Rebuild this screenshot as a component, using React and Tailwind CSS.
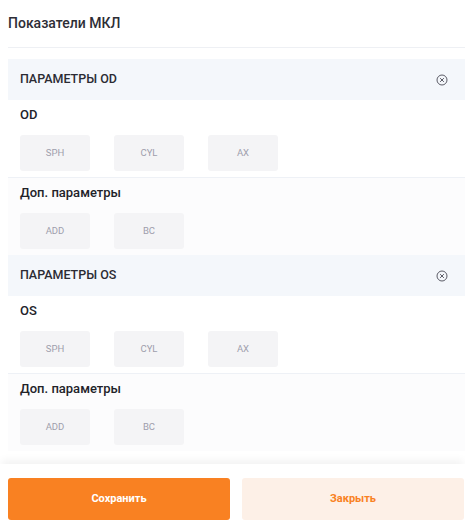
import React from "react";

// Small circled-x close icon used in section headers
const CloseCircle = () => (
    <svg width="12" height="12" viewBox="0 0 12 12" fill="none" className="shrink-0">
        <circle cx="6" cy="6" r="5" stroke="#4a4a55" strokeWidth="0.9" />
        <path d="M4.4 4.4 L7.6 7.6 M7.6 4.4 L4.4 7.6" stroke="#4a4a55" strokeWidth="0.9" strokeLinecap="round" />
    </svg>
);

const Field = ({ label }) => (
    <div className="w-[70px] h-9 rounded-[3px] bg-[#f4f4f6] flex items-center justify-center text-[9.5px] text-[#9e9eac]">
        {label}
    </div>
);

const EyeSection = ({ eye }) => (
    <div>
        {/* Section header */}
        <div className="h-[41px] bg-[#f4f7fb] flex items-center justify-between pl-3 pr-[17px]">
            <span className="text-[12.5px] font-medium text-[#2b2b33]">ПАРАМЕТРЫ {eye}</span>
            <CloseCircle />
        </div>

        {/* Main params */}
        <div className="px-3 pt-[7px] pb-[6px] border-b border-[#eef1f6]">
            <p className="text-[13px] leading-4 font-medium text-[#222229]">{eye}</p>
            <div className="flex gap-6 mt-3">
                <Field label="SPH" />
                <Field label="CYL" />
                <Field label="AX" />
            </div>
        </div>

        {/* Extra params */}
        <div className="px-3 pt-[7px] pb-[6px] bg-[#fcfcfd]">
            <p className="text-[13px] leading-4 font-medium text-[#222229]">Доп. параметры</p>
            <div className="flex gap-6 mt-3">
                <Field label="ADD" />
                <Field label="BC" />
            </div>
        </div>
    </div>
);

export default function App() {
    return (
        <div className="w-[465px] h-[526px] bg-white flex flex-col overflow-hidden" style={{ fontFamily: "Roboto, 'Noto Sans', sans-serif" }}>
            <div className="pl-2 flex-1">
                <div className="pt-[13px] pb-[14px] border-b border-[#eef0f4]">
                    <h1 className="text-[14px] leading-5 font-medium text-[#2e2e36]">Показатели МКЛ</h1>
                </div>
                <div className="mt-[11px]">
                    <EyeSection eye="OD" />
                    <EyeSection eye="OS" />
                </div>
            </div>

            {/* Footer */}
            <div className="pl-2 pr-[1px] pt-[14px] pb-[6px] flex gap-3 bg-white shadow-[0_-6px_8px_-2px_rgba(0,0,0,0.05)]">
                <button className="flex-1 h-[42px] rounded-[3px] bg-[#f98122] text-white text-[11px] font-bold">
                    Сохранить
                </button>
                <button className="flex-1 h-[42px] rounded-[3px] bg-[#fdf0e7] text-[#f98122] text-[11px] font-bold">
                    Закрыть
                </button>
            </div>
        </div>
    );
}
